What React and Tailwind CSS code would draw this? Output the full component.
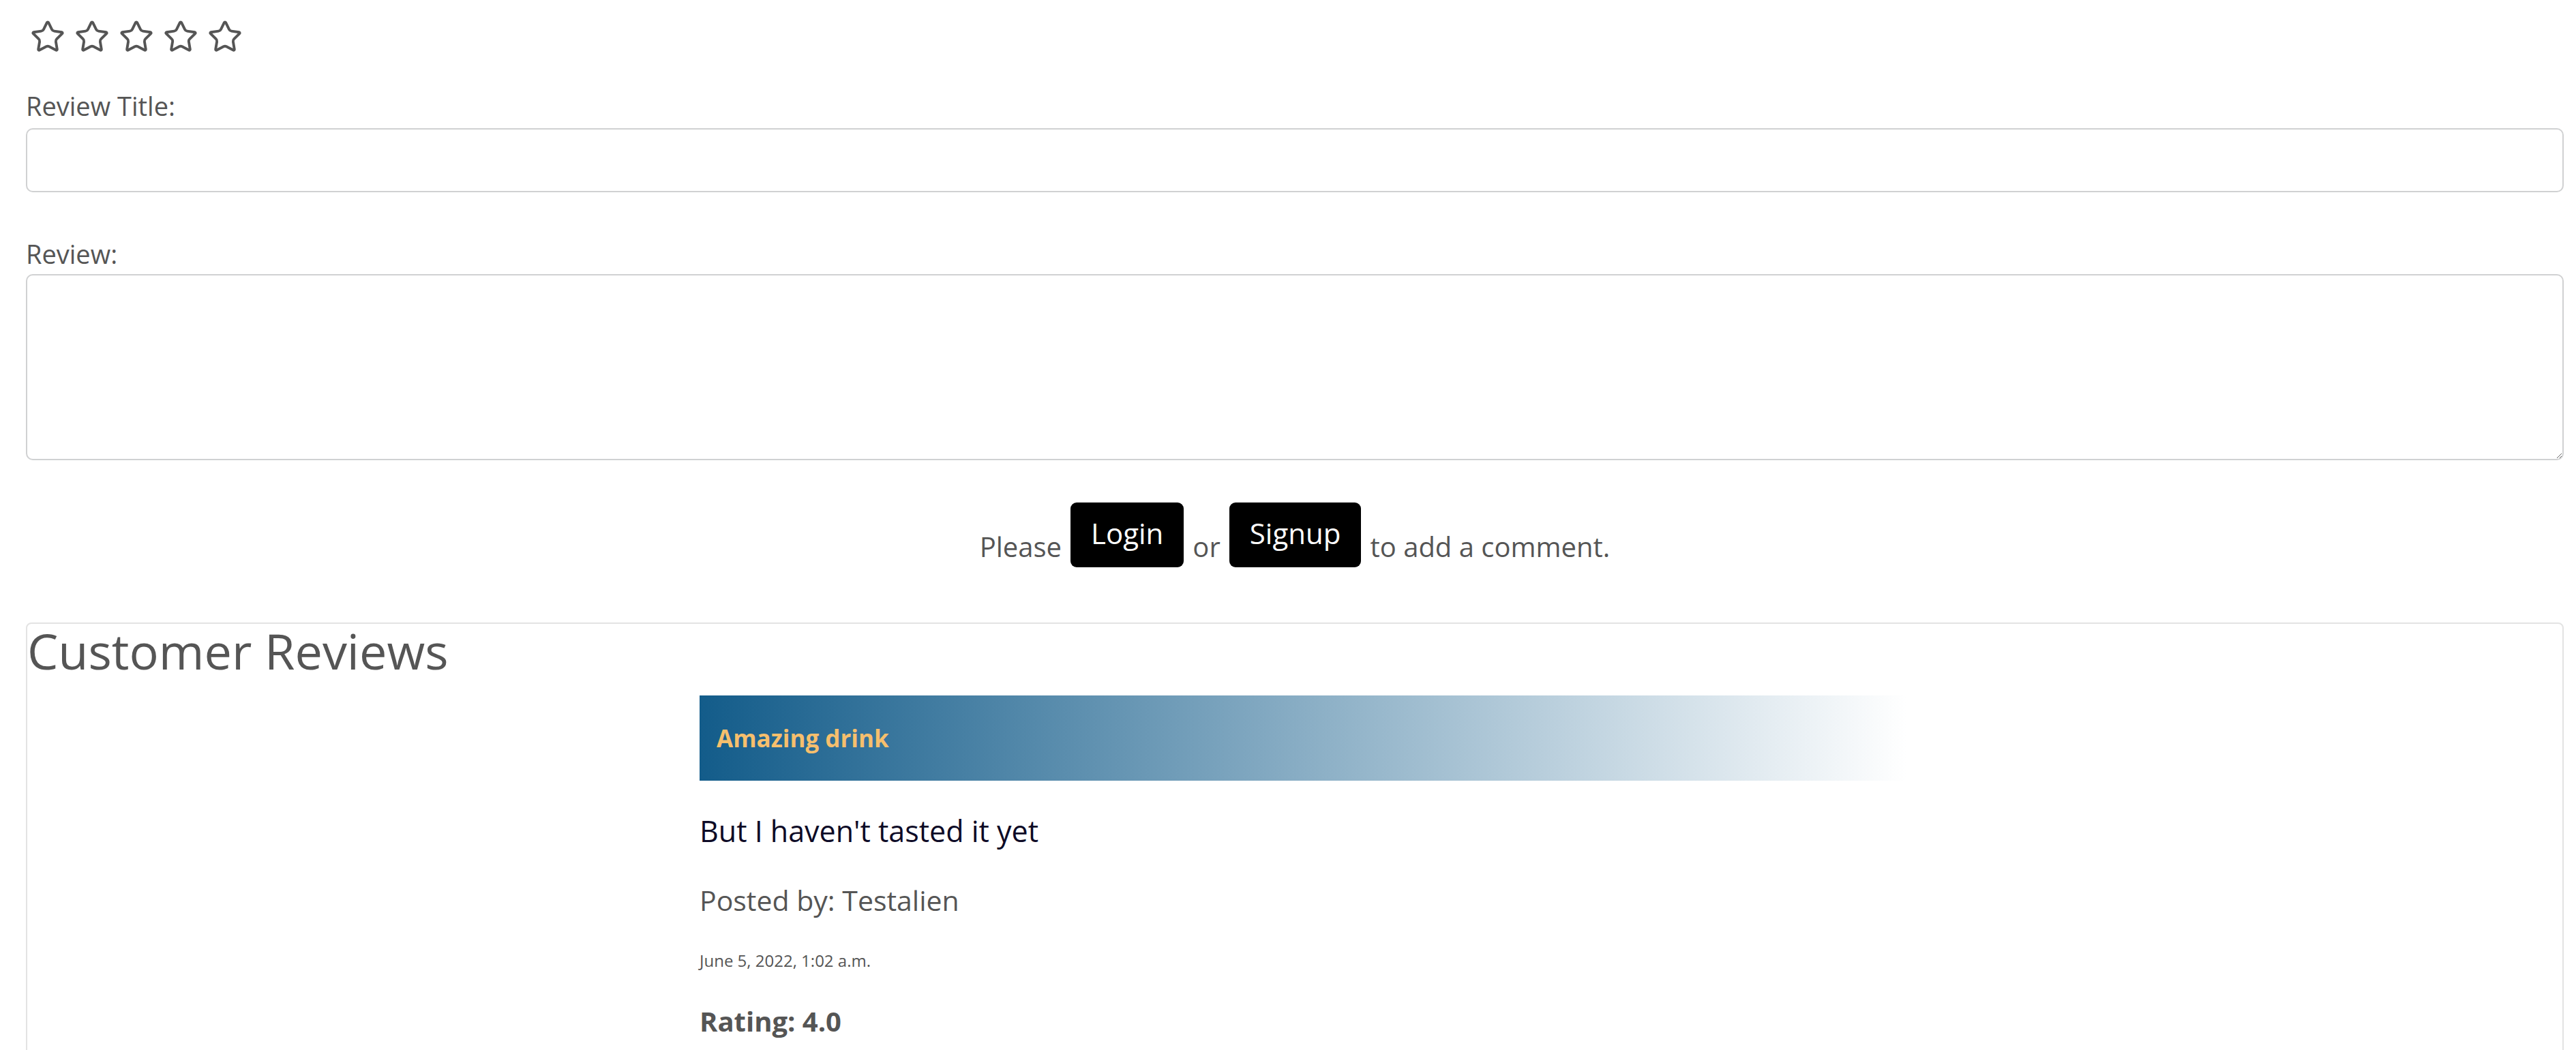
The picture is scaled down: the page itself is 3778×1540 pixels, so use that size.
import { Star } from "lucide-react";

const Stars = () => (
  <div className="flex gap-[13px] ml-[6px]">
    {[1, 2, 3, 4, 5].map((n) => (
      <Star key={n} size={52} strokeWidth={1.8} className="text-[#555]" />
    ))}
  </div>
);

function Review({ review }) {
  return (
    <div className="ml-[986px] w-[1858px] pb-[60px]">
      <div className="mt-[30px] w-[1770px] h-[125px] flex items-center pl-[25px] bg-[linear-gradient(to_right,#135c8a,#ffffff)]">
        <span className="text-[35px] leading-none font-bold text-[#f6bf6d]">
          {review.title}
        </span>
      </div>
      <p className="mt-[52px] text-[43px] leading-none text-[#0d0a26]">
        {review.body}
      </p>
      <p className="mt-[60px] text-[41px] leading-none text-[#555]">
        Posted by: {review.author}
      </p>
      <p className="mt-[56px] text-[24px] leading-none text-[#555]">
        {review.date}
      </p>
      <p className="mt-[57px] text-[40px] leading-none font-bold text-[#555]">
        Rating: {review.rating}
      </p>
    </div>
  );
}

export default function App() {
  const review = {
    title: "Amazing drink",
    body: "But I haven't tasted it yet",
    author: "Testalien",
    date: "June 5, 2022, 1:02 a.m.",
    rating: "4.0",
  };

  return (
    <div className="min-h-screen bg-white pl-[38px] pr-[18px] pt-[28px] font-['Open_Sans',sans-serif] text-[#555]">
      <Stars />

      <label className="block mt-[47px] text-[38px] leading-[57px]">
        Review Title:
      </label>
      <input
        type="text"
        className="block mt-[4px] w-full h-[94px] border-2 border-[#d0d1d2] rounded-[10px] px-4 text-[38px] outline-none"
      />

      <label className="block mt-[62px] text-[38px] leading-[57px]">
        Review:
      </label>
      <textarea className="block mt-[1px] w-full h-[273px] border-2 border-[#d0d1d2] rounded-[10px] px-4 text-[38px] outline-none" />

      <div className="mt-[62px] flex justify-center items-end gap-[13px] text-[40px] leading-none">
        <span className="pb-[10px]">Please</span>
        <button className="bg-black text-white rounded-[9px] text-[42px] leading-none px-[30px] pt-[24px] pb-[29px]">
          Login
        </button>
        <span className="pb-[10px]">or</span>
        <button className="bg-black text-white rounded-[9px] text-[42px] leading-none px-[30px] pt-[24px] pb-[29px]">
          Signup
        </button>
        <span className="pb-[10px]">to add a comment.</span>
      </div>

      <div className="mt-[81px] border-2 border-[#e3e3e3] rounded-[8px]">
        <h2 className="mt-[3px] text-[72px] leading-none text-[#555]">
          Customer Reviews
        </h2>
        <Review review={review} />
      </div>
    </div>
  );
}
